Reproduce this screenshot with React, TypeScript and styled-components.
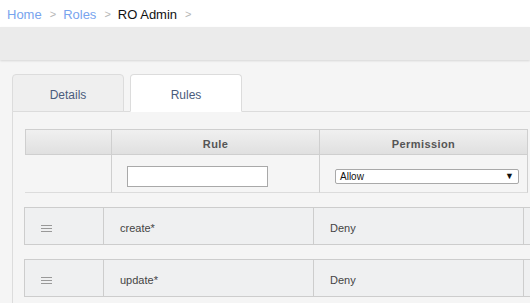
import React from "react";
import styled, { createGlobalStyle } from "styled-components";

const GlobalStyle = createGlobalStyle`
  html, body {
    margin: 0;
    padding: 0;
    background: #f5f5f5;
    overflow: hidden;
    font-family: "Liberation Sans", Arial, sans-serif;
  }
`;

const Page = styled.div`
  width: 530px;
  height: 303px;
  overflow: hidden;
  background: #f5f5f5;
`;

const Breadcrumb = styled.nav`
  height: 27px;
  background: #fff;
  display: flex;
  align-items: center;
  padding-left: 7px;
  font-size: 13px;
  padding-top: 1px;
  box-sizing: border-box;
`;

const Crumb = styled.span<{ $active?: boolean }>`
  color: ${(p) => (p.$active ? "#111" : "#78a4ee")};
`;

const Sep = styled.span`
  color: #b5b5b5;
  font-size: 11px;
  margin: 0 7px 0 8px;
`;

const Toolbar = styled.div`
  height: 33px;
  background: #ebebeb;
  box-shadow: 0 1px 2px rgba(0, 0, 0, 0.12);
  position: relative;
`;

const Main = styled.div`
  padding: 14px 0 0 12px;
`;

const Tabs = styled.div`
  display: flex;
  gap: 6px;
  margin-bottom: -1px;
  position: relative;
`;

const Tab = styled.div<{ $active?: boolean }>`
  width: 112px;
  height: 38px;
  box-sizing: border-box;
  border: 1px solid #dcdcdc;
  border-bottom: ${(p) => (p.$active ? "1px solid #fff" : "1px solid #dcdcdc")};
  border-radius: 4px 4px 0 0;
  background: ${(p) => (p.$active ? "#fff" : "#efefef")};
  color: #4a5b7c;
  font-size: 12px;
  display: flex;
  align-items: center;
  justify-content: center;
  padding-top: 4px;
`;

const Panel = styled.div`
  border-top: 1px solid #dcdcdc;
  border-left: 1px solid #dcdcdc;
  padding: 17px 0 0 12px;
  height: 200px;
`;

const Grid = styled.div<{ $cols: string }>`
  display: grid;
  grid-template-columns: ${(p) => p.$cols};
`;

const HeadCell = styled.div`
  height: 26px;
  box-sizing: border-box;
  background: linear-gradient(#f0f0f0, #e0e0e0);
  border: 1px solid #cfcfcf;
  border-left: none;
  color: #555;
  font-size: 11px;
  font-weight: bold;
  letter-spacing: 0.4px;
  display: flex;
  align-items: center;
  justify-content: center;
  padding-top: 3px;
  &:first-child {
    border-left: 1px solid #cfcfcf;
  }
`;

const BodyCell = styled.div`
  height: 38px;
  box-sizing: border-box;
  border-right: 1px solid #cfcfcf;
  border-bottom: 1px solid #dcdcdc;
  display: flex;
  align-items: center;
  &:first-child {
    border-left: 1px solid #cfcfcf;
  }
`;

const TextInput = styled.input`
  width: 141px;
  height: 21px;
  box-sizing: border-box;
  margin-left: 15px;
  margin-top: 5px;
  border: 1px solid #a9a9a9;
  background: #fff;
  padding: 0 3px;
`;

const SelectBox = styled.div`
  width: 184px;
  height: 15px;
  box-sizing: border-box;
  margin-left: 15px;
  margin-top: 5px;
  border: 1px solid #a9a9a9;
  border-radius: 2px;
  background: #fff;
  display: flex;
  align-items: center;
  justify-content: space-between;
  padding: 0 4px;
  font-size: 10px;
  color: #111;
`;

const Caret = styled.span`
  font-size: 9px;
  color: #111;
`;

const RuleList = styled.div`
  margin-left: -1px;
  margin-top: 14px;
  display: flex;
  flex-direction: column;
  gap: 14px;
  width: 600px;
`;

const RuleCell = styled.div`
  height: 38px;
  box-sizing: border-box;
  background: #eff0f1;
  border: 1px solid #cdcdcd;
  border-left: none;
  display: flex;
  align-items: center;
  padding-left: 16px;
  padding-top: 4px;
  font-size: 11px;
  color: #444;
  &:first-child {
    border-left: 1px solid #cdcdcd;
  }
`;

const Handle = () => (
  <svg width="11" height="7" viewBox="0 0 11 7">
    <rect x="0" y="0" width="11" height="1" fill="#999" />
    <rect x="0" y="3" width="11" height="1" fill="#999" />
    <rect x="0" y="6" width="11" height="1" fill="#999" />
  </svg>
);

const rules = [
  { name: "create*", permission: "Deny" },
  { name: "update*", permission: "Deny" },
];

const App = () => {
  return (
    <Page>
      <GlobalStyle />
      <Breadcrumb>
        <Crumb>Home</Crumb>
        <Sep>&gt;</Sep>
        <Crumb>Roles</Crumb>
        <Sep>&gt;</Sep>
        <Crumb $active>RO Admin</Crumb>
        <Sep>&gt;</Sep>
      </Breadcrumb>
      <Toolbar />
      <Main>
        <Tabs>
          <Tab>Details</Tab>
          <Tab $active>Rules</Tab>
        </Tabs>
        <Panel>
          <Grid $cols="87px 208px 208px">
            <HeadCell />
            <HeadCell>Rule</HeadCell>
            <HeadCell>Permission</HeadCell>
            <BodyCell />
            <BodyCell>
              <TextInput />
            </BodyCell>
            <BodyCell>
              <SelectBox>
                <span>Allow</span>
                <Caret>▼</Caret>
              </SelectBox>
            </BodyCell>
          </Grid>
          <RuleList>
            {rules.map((r) => (
              <Grid $cols="80px 210px 210px 100px" key={r.name}>
                <RuleCell>
                  <Handle />
                </RuleCell>
                <RuleCell>{r.name}</RuleCell>
                <RuleCell>{r.permission}</RuleCell>
                <RuleCell />
              </Grid>
            ))}
          </RuleList>
        </Panel>
      </Main>
    </Page>
  );
};

export default App;
